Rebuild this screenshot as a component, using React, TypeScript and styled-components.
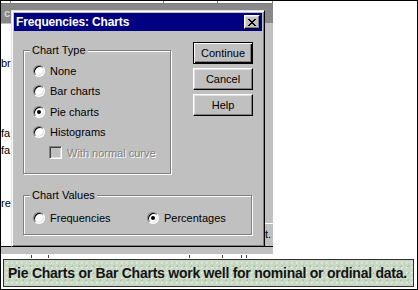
import React from 'react';
import styled, { createGlobalStyle } from 'styled-components';

const GlobalStyle = createGlobalStyle`
  html, body { margin: 0; padding: 0; background: #fff; }
  body { font-family: "Liberation Sans", Arial, sans-serif; }
`;

const FACE = '#c0c0c0';

const Frame = styled.div`
  width: 418px;
  height: 290px;
  box-sizing: border-box;
  border: 1px solid #000;
  background: #fff;
  overflow: hidden;
  display: flex;
  flex-direction: column;
`;

const AppRow = styled.div`
  display: flex;
  height: 258px;
  flex: none;
`;

// the spreadsheet-ish window behind the dialog
const AppWindow = styled.div`
  position: relative;
  width: 272px;
  display: flex;
  flex-direction: column;
`;

const GridStrip = styled.div`
  height: 2px;
  border-bottom: 1px solid #808080;
  display: flex;
`;

const GridCell = styled.div<{ $w: number }>`
  width: ${(p) => p.$w}px;
  flex: none;
  border-right: 1px solid #808080;
`;

const HeaderBand = styled.div`
  height: 19px;
  background: #888;
  border-bottom: 1px solid ${FACE};
  color: #d4d4d4;
  font-size: 11px;
  font-weight: bold;
  line-height: 19px;
  padding-left: 3px;
`;

const AppBody = styled.div`
  flex: 1;
  display: flex;
`;

const Sheet = styled.div`
  flex: 1;
  overflow: hidden;
  display: flex;
  flex-direction: column;
`;

const SheetLine = styled.div<{ $mt: number }>`
  margin-top: ${(p) => p.$mt}px;
  font-size: 11px;
  line-height: 13px;
  color: #000;
  white-space: nowrap;
`;

const SideColumn = styled.div`
  width: 8px;
  background: ${FACE};
  display: flex;
  flex-direction: column;
  justify-content: flex-end;
  overflow: hidden;
`;

const SideCell = styled.div`
  height: 20px;
  border-top: 1px solid #fff;
  font-size: 11px;
  line-height: 16px;
  padding-top: 2px;
  white-space: nowrap;
`;

const HScroll = styled.div`
  height: 7px;
  border-top: 1px solid #000;
  background: ${FACE};
`;

const Ticks = styled.div`
  height: 5px;
  display: flex;
  align-items: flex-start;
`;

const Tick = styled.span<{ $ml: number }>`
  margin-left: ${(p) => p.$ml}px;
  width: 1px;
  height: 3px;
  background: #404040;
  margin-top: 1px;
`;

/* ---- dialog ---- */

const Dialog = styled.div`
  position: absolute;
  left: 10px;
  top: 9px;
  width: 254px;
  height: 237px;
  box-sizing: border-box;
  background: ${FACE};
  border: 1px solid;
  border-color: #dfdfdf #000 #000 #dfdfdf;
  box-shadow: inset 1px 1px 0 #fff, inset -1px -1px 0 #808080;
  padding: 2px;
  display: flex;
  flex-direction: column;
`;

const TitleBar = styled.div`
  height: 18px;
  background: #000080;
  display: flex;
  align-items: center;
  justify-content: space-between;
  padding: 0 2px 0 2px;
`;

const Title = styled.span`
  color: #fff;
  font-size: 12px;
  font-weight: bold;
  letter-spacing: -0.15px;
`;

const CloseButton = styled.span`
  width: 16px;
  height: 14px;
  box-sizing: border-box;
  background: ${FACE};
  border: 1px solid;
  border-color: #fff #000 #000 #fff;
  box-shadow: inset -1px -1px 0 #808080, inset 1px 1px 0 #dfdfdf;
  display: flex;
  align-items: center;
  justify-content: center;
`;

const DialogBody = styled.div`
  display: grid;
  grid-template-columns: 148px 60px;
  column-gap: 22px;
  row-gap: 15px;
  padding: 11px 0 0 9px;
  align-items: start;
`;

const Group = styled.fieldset<{ $pt: number; $pb: number; $w: number }>`
  margin: 0;
  margin-top: 1.5px;
  width: ${(p) => p.$w}px;
  box-sizing: border-box;
  padding: ${(p) => p.$pt}px 0 ${(p) => p.$pb}px 9px;
  border: 1px solid #808080;
  box-shadow: inset 1px 1px 0 #fff, 1px 1px 0 #fff;
  min-inline-size: 0;
`;

const GroupSpan = styled(Group)`
  grid-column: 1 / span 2;
  margin-top: 0;
`;

const Legend = styled.legend`
  margin-left: -3px;
  padding: 0 2px;
  font-size: 11px;
  line-height: 13px;
  color: #000;
  background: ${FACE};
`;

const OptionRow = styled.div<{ $indent?: number }>`
  height: 20.5px;
  display: flex;
  align-items: center;
  gap: 5px;
  padding-left: ${(p) => p.$indent ?? 0}px;
  font-size: 11px;
  color: #000;
  white-space: nowrap;
`;

const InlineOptions = styled.div`
  display: grid;
  grid-template-columns: 114px auto;
`;

const RadioMark = styled.span<{ $checked?: boolean }>`
  position: relative;
  flex: none;
  width: 12px;
  height: 12px;
  box-sizing: border-box;
  border-radius: 50%;
  background: #fff;
  border: 1px solid;
  border-color: #808080 #fff #fff #808080;
  box-shadow: inset 1px 1px 0 #000, inset -1px -1px 0 #dfdfdf;

  &::after {
    content: '';
    display: ${(p) => (p.$checked ? 'block' : 'none')};
    position: absolute;
    left: 3px;
    top: 3px;
    width: 4px;
    height: 4px;
    border-radius: 50%;
    background: #000;
  }
`;

const CheckMark = styled.span`
  flex: none;
  width: 13px;
  height: 13px;
  box-sizing: border-box;
  background: ${FACE};
  border: 1px solid;
  border-color: #808080 #fff #fff #808080;
  box-shadow: inset 1px 1px 0 #404040, inset -1px -1px 0 #dfdfdf;
`;

const DisabledLabel = styled.span`
  color: #808080;
  text-shadow: 1px 1px 0 #fff;
`;

const ButtonColumn = styled.div`
  display: flex;
  flex-direction: column;
  gap: 4px;
`;

const Button = styled.button<{ $default?: boolean }>`
  width: 60px;
  height: 22px;
  box-sizing: border-box;
  margin: 0;
  padding: 0;
  font-family: inherit;
  font-size: 11px;
  color: #000;
  background: ${FACE};
  border: 1px solid;
  border-color: ${(p) => (p.$default ? '#000' : '#fff #000 #000 #fff')};
  box-shadow: ${(p) =>
    p.$default
      ? 'inset 1px 1px 0 #fff, inset -1px -1px 0 #000, inset -2px -2px 0 #808080'
      : 'inset -1px -1px 0 #808080, inset 1px 1px 0 #dfdfdf'};
`;

/* ---- caption banner ---- */

const Banner = styled.div`
  flex: none;
  height: 28px;
  margin: 0 3px 0 2px;
  box-sizing: border-box;
  border: 1px solid #303030;
  background-color: #c9d8c5;
  background-image: radial-gradient(rgba(255, 255, 255, 0.45) 1px, transparent 1px),
    radial-gradient(rgba(110, 140, 110, 0.3) 1px, transparent 1px);
  background-size: 5px 5px, 7px 7px;
  background-position: 0 0, 2px 3px;
  display: flex;
  align-items: center;
  padding-left: 4px;
  font-size: 14px;
  font-weight: bold;
  letter-spacing: -0.25px;
  color: #141414;
  white-space: nowrap;
`;

const Radio = ({ label, checked }: { label: string; checked?: boolean }) => (
  <OptionRow>
    <RadioMark $checked={checked} />
    <span>{label}</span>
  </OptionRow>
);

const CloseGlyph = () => (
  <svg width="8" height="7" viewBox="0 0 8 7" shapeRendering="crispEdges">
    <path d="M0 0h2v1H0zM6 0h2v1H6zM1 1h2v1H1zM5 1h2v1H5zM2 2h4v1H2zM3 3h2v1H3zM2 4h4v1H2zM1 5h2v1H1zM5 5h2v1H5zM0 6h2v1H0zM6 6h2v1H6z" fill="#000" />
  </svg>
);

const gridCells = [9, 152, 53, 54];
const ticks = [30, 16, 140, 32, 18, 4];

export default function App() {
  return (
    <>
      <GlobalStyle />
      <Frame>
        <AppRow>
          <AppWindow>
            <GridStrip>
              {gridCells.map((w, i) => (
                <GridCell key={i} $w={w} />
              ))}
            </GridStrip>
            <HeaderBand>c</HeaderBand>
            <AppBody>
              <Sheet>
                <SheetLine $mt={33}>br.</SheetLine>
                <SheetLine $mt={57}>fa</SheetLine>
                <SheetLine $mt={4}>fa</SheetLine>
                <SheetLine $mt={40}>re</SheetLine>
              </Sheet>
              <SideColumn>
                <SideCell>t.</SideCell>
              </SideColumn>
            </AppBody>
            <HScroll />
            <Ticks>
              {ticks.map((m, i) => (
                <Tick key={i} $ml={m} />
              ))}
            </Ticks>

            <Dialog>
              <TitleBar>
                <Title>Frequencies: Charts</Title>
                <CloseButton>
                  <CloseGlyph />
                </CloseButton>
              </TitleBar>
              <DialogBody>
                <Group $w={148} $pt={4} $pb={9.5}>
                  <Legend>Chart Type</Legend>
                  <Radio label="None" />
                  <Radio label="Bar charts" />
                  <Radio label="Pie charts" checked />
                  <Radio label="Histograms" />
                  <OptionRow $indent={16}>
                    <CheckMark />
                    <DisabledLabel>With normal curve</DisabledLabel>
                  </OptionRow>
                </Group>
                <ButtonColumn>
                  <Button $default>Continue</Button>
                  <Button>Cancel</Button>
                  <Button>Help</Button>
                </ButtonColumn>
                <GroupSpan $w={229} $pt={6.5} $pb={5}>
                  <Legend>Chart Values</Legend>
                  <InlineOptions>
                    <Radio label="Frequencies" />
                    <Radio label="Percentages" checked />
                  </InlineOptions>
                </GroupSpan>
              </DialogBody>
            </Dialog>
          </AppWindow>
        </AppRow>
        <Banner>Pie Charts or Bar Charts work well for nominal or ordinal data.</Banner>
      </Frame>
    </>
  );
}
